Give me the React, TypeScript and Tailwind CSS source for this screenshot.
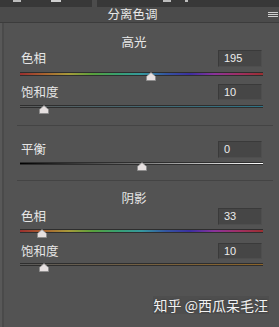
import React from "react";

const FONT = { fontFamily: '"Noto Sans CJK SC", "Noto Sans", sans-serif' };

function Thumb({ pct, top }: { pct: number; top: number }) {
  return (
    <svg
      width="10"
      height="9"
      viewBox="0 0 10 9"
      className="absolute -translate-x-1/2"
      style={{ left: `${pct}%`, top }}
    >
      <polygon points="5,0.5 9.5,4.5 9.5,8.5 0.5,8.5 0.5,4.5" fill="#e6e0e0" stroke="#8a8a8a" strokeWidth="0.8" />
    </svg>
  );
}

function Row({ label, value, h, mt }: { label: string; value: string; h: string; mt: string }) {
  return (
    <div className={`flex items-center justify-between ${h} ${mt}`}>
      <span className="text-[12.5px] leading-none text-[#e6e6e6] pl-[1px]">{label}</span>
      <div className="w-[44px] h-full mr-[1px] bg-[#464646] border border-[#3a3a3a] border-r-[#4e4e4e] border-b-[#4e4e4e] flex items-center pl-[5px]">
        <span className="text-[11px] leading-none text-[#ececec]" style={{ fontFamily: '"Liberation Sans", sans-serif' }}>
          {value}
        </span>
      </div>
    </div>
  );
}

function Bar({ bg, pct, mt, h }: { bg: string; pct: number; mt: string; h: string }) {
  return (
    <div className={`relative ${mt} ${h}`}>
      <div className={`w-full h-full border-y border-[#2e2e2e] ${bg}`} />
      <Thumb pct={pct} top={0} />
    </div>
  );
}

export default function App() {
  return (
    <div className="w-[279px] h-[327px] bg-[#535353] flex flex-col overflow-hidden" style={FONT}>
      {/* top tabs */}
      <div className="h-[7px] flex bg-[#4a4a4a] shrink-0">
        <div className="w-[92px] h-full bg-[#383838] relative">
          <div className="absolute left-[13px] top-0 w-[8px] h-[2px] bg-[#bdbdbd]" />
          <div className="absolute left-[51px] top-0 w-[10px] h-[2px] bg-[#cfcfcf]" />
        </div>
        <div className="w-[5px] h-full bg-[#4c4c4c]" />
        <div className="flex-1 h-full bg-[#383838] relative">
          <div className="absolute left-[66px] top-0 w-[8px] h-[2px] bg-[#bdbdbd]" />
          <div className="absolute left-[88px] top-0 w-[3px] h-[2px] bg-[#bdbdbd]" />
        </div>
      </div>
      {/* header */}
      <div className="h-[16px] shrink-0 bg-[#4b4b4b] border-b border-[#3c3c3c] relative flex items-center justify-center pr-[14px]">
        <span className="text-[12.5px] leading-none text-[#e8e8e8]">分离色调</span>
        <div className="absolute right-[1px] top-[5px] flex flex-col gap-[1px]">
          <div className="w-[10px] h-px bg-[#cfcfcf]" />
          <div className="w-[10px] h-px bg-[#cfcfcf]" />
          <div className="w-[10px] h-px bg-[#cfcfcf]" />
        </div>
      </div>
      {/* body */}
      <div className="flex-1 flex">
        <div className="w-[2px] bg-[#585858]" />
        <div className="w-[2px] bg-[#4a4a4a]" />
        <div className="ml-[16px] w-[243px] flex flex-col">
          <div className="mt-[11px] h-[16px] flex items-center justify-center pr-[15px]">
            <span className="text-[12.5px] leading-none text-[#e8e8e8]">高光</span>
          </div>
          <Row label="色相" value="195" h="h-[17px]" mt="mt-0" />
          <Bar
            mt="mt-[5px]"
            h="h-[4px]"
            pct={54}
            bg="bg-[linear-gradient(to_right,#9a2f2f,#a8622f,#a69a3a,#58a03c,#38a070,#36989e,#3455a0,#3c2fa0,#8a339a,#a02f64,#9a2f30)]"
          />
          <Row label="饱和度" value="10" h="h-[16px]" mt="mt-[8px]" />
          <Bar mt="mt-[5px]" h="h-[3px]" pct={10} bg="bg-[linear-gradient(to_right,#5a5a5a,#2e7386)]" />
          <div className="mt-[17px] -ml-[3px] w-[256px] h-px bg-[#444444]" />
          <Row label="平衡" value="0" h="h-[17px]" mt="mt-[15px]" />
          <Bar mt="mt-[4px]" h="h-[3px]" pct={50} bg="bg-[linear-gradient(to_right,#000000,#7a7a7a,#ffffff)]" />
          <div className="mt-[15px] -ml-[3px] w-[256px] h-px bg-[#444444]" />
          <div className="mt-[9px] h-[16px] flex items-center justify-center pr-[15px]">
            <span className="text-[12.5px] leading-none text-[#e8e8e8]">阴影</span>
          </div>
          <Row label="色相" value="33" h="h-[17px]" mt="mt-[2px]" />
          <Bar
            mt="mt-[4px]"
            h="h-[4px]"
            pct={9}
            bg="bg-[linear-gradient(to_right,#9a2f2f,#a8622f,#a69a3a,#58a03c,#38a070,#36989e,#3455a0,#3c2fa0,#8a339a,#a02f64,#9a2f30)]"
          />
          <Row label="饱和度" value="10" h="h-[16px]" mt="mt-[10px]" />
          <Bar mt="mt-[4px]" h="h-[3px]" pct={10} bg="bg-[linear-gradient(to_right,#5a5a5a,#8c6428)]" />
          <div className="mt-[30px] h-[18px] flex justify-end -mr-[6px]">
            <span className="px-[1px] text-[14px] leading-[18px] text-[#f2f2f2] bg-[#4e4e4e]" style={{ textShadow: "0 0 2px rgba(0,0,0,0.4)" }}>
              知乎 @西瓜呆毛汪
            </span>
          </div>
        </div>
      </div>
    </div>
  );
}
